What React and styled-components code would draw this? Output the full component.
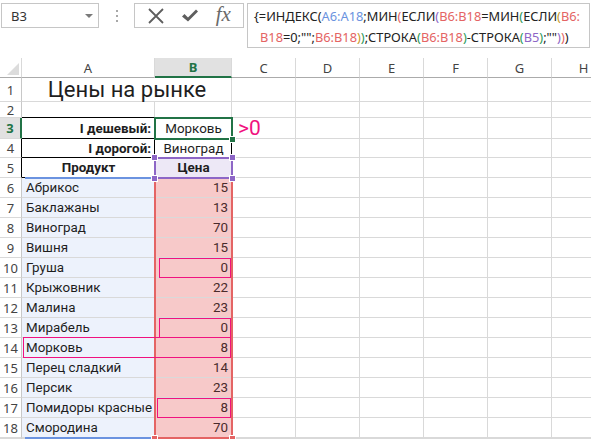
import React from "react";
import styled, { createGlobalStyle } from "styled-components";

const GlobalStyle = createGlobalStyle`
  html, body {
    margin: 0;
    padding: 0;
    background: #fff;
  }
  body {
    width: 591px;
    height: 441px;
    overflow: hidden;
    font-family: "Noto Sans", "Open Sans", sans-serif;
    color: #222;
  }
`;

const UI_FONT = `"Noto Sans", "Open Sans", sans-serif`;
const CELL_FONT = `Roboto, "Liberation Sans", sans-serif`;

const GRID = "#d9d9d9";
const GREEN = "#217346";
const BLUE = "#6b93e0";
const RED = "#e46464";
const PURPLE = "#8d66c6";
const MAGENTA = "#f0127f";

const Page = styled.div`
  width: 591px;
  height: 441px;
  overflow: hidden;
  display: flex;
  flex-direction: column;
`;

const Toolbar = styled.div`
  height: 58px;
  box-sizing: border-box;
  padding: 3px 1px 0 1px;
  display: flex;
  align-items: flex-start;
`;

const NameBox = styled.div`
  width: 98px;
  height: 25px;
  box-sizing: border-box;
  border: 1px solid #c6c6c6;
  display: flex;
  align-items: center;
  justify-content: space-between;
  padding: 0 5px 0 9px;
  font-family: ${UI_FONT};
  font-size: 13px;
  color: #333;
`;

const Caret = styled.span`
  width: 0;
  height: 0;
  border-left: 4px solid transparent;
  border-right: 4px solid transparent;
  border-top: 4px solid #7a7a7a;
`;

const Grip = styled.div`
  width: 35px;
  height: 25px;
  display: flex;
  flex-direction: column;
  align-items: center;
  justify-content: center;
  gap: 3px;

  span {
    width: 2px;
    height: 2px;
    background: #a8a8a8;
  }
`;

const ButtonBox = styled.div`
  width: 110px;
  height: 25px;
  box-sizing: border-box;
  border: 1px solid #c6c6c6;
  display: flex;
  align-items: center;
  justify-content: space-around;
  padding: 0 4px;
`;

const FxLabel = styled.span`
  font-family: "Liberation Serif", serif;
  font-style: italic;
  font-size: 21px;
  color: #6a6a6a;
  line-height: 1;
  margin-top: -2px;
`;

const FormulaBox = styled.div`
  margin-left: 3px;
  flex: 1;
  height: 45px;
  box-sizing: border-box;
  border: 1px solid #c6c6c6;
  padding: 2px 0 0 6px;
  font-family: ${UI_FONT};
  font-size: 12.8px;
  line-height: 21px;
  color: #222;
  white-space: nowrap;
  overflow: hidden;
`;

const FormulaLine = styled.div`
  padding-left: ${p => p.$indent || 0}px;
`;

const Tok = styled.span`
  color: ${p => p.$c || "#222"};
`;

const Sheet = styled.div`
  display: grid;
  grid-template-columns: 22px 133px 77px 64px 64px 64px 64px 64px 64px;
  grid-template-rows: 20px 24px 16px 21px 19px repeat(14, 20px);
  width: 591px;
  overflow: hidden;
`;

const ColHead = styled.div`
  grid-column: ${p => p.$col};
  grid-row: 1;
  box-sizing: border-box;
  border-right: 1px solid ${GRID};
  border-bottom: ${p => (p.$active ? `2px solid ${GREEN}` : "1px solid #ababab")};
  background: ${p => (p.$active ? "#e1e1e1" : "#fff")};
  color: ${p => (p.$active ? GREEN : "#444")};
  font-weight: ${p => (p.$active ? 700 : 400)};
  font-family: ${UI_FONT};
  font-size: 13px;
  display: flex;
  align-items: center;
  justify-content: center;
`;

const Corner = styled.div`
  grid-column: 1;
  grid-row: 1;
  box-sizing: border-box;
  border-right: 1px solid ${GRID};
  border-bottom: 1px solid #ababab;
  position: relative;

  &::after {
    content: "";
    position: absolute;
    right: 2px;
    bottom: 2px;
    width: 0;
    height: 0;
    border-left: 12px solid transparent;
    border-bottom: 12px solid #dcdcdc;
  }
`;

const RowHead = styled.div`
  grid-column: 1;
  grid-row: ${p => p.$row};
  box-sizing: border-box;
  border-bottom: 1px solid ${GRID};
  border-right: ${p => (p.$active ? `2px solid ${GREEN}` : `1px solid ${p.$edge || "#c8c8c8"}`)};
  background: ${p => (p.$active ? "#e1e1e1" : "#fff")};
  color: ${p => (p.$active ? GREEN : "#444")};
  font-weight: ${p => (p.$active ? 700 : 400)};
  font-family: ${UI_FONT};
  font-size: 13px;
  display: flex;
  align-items: center;
  justify-content: center;
`;

const Cell = styled.div`
  grid-column: ${p => p.$col};
  grid-row: ${p => p.$row};
  box-sizing: border-box;
  border-right: 1px solid ${p => p.$br || GRID};
  border-bottom: 1px solid ${p => p.$bb || GRID};
  background: ${p => p.$bg || "#fff"};
  display: flex;
  align-items: center;
  justify-content: ${p =>
    p.$align === "right" ? "flex-end" : p.$align === "center" ? "center" : "flex-start"};
  padding: 0 3px 0 ${p => p.$pl || 4}px;
  font-family: ${CELL_FONT};
  font-size: ${p => p.$size || 13.4}px;
  font-weight: ${p => (p.$bold ? 700 : 400)};
  color: ${p => p.$color || "#1e1e1e"};
  white-space: nowrap;
  overflow: visible;
`;

const Frame = styled.div`
  grid-column: ${p => p.$col};
  grid-row: ${p => p.$row};
  margin: ${p => p.$m || "0"};
  box-sizing: border-box;
  position: relative;
  pointer-events: none;
  border-style: solid;
  border-color: ${p => p.$color};
  border-width: ${p => p.$w || "2px"};
`;

const Handle = styled.span`
  position: absolute;
  width: 5px;
  height: 5px;
  background: ${p => p.$color};
  border: 1px solid #fff;
  ${p => (p.$top ? "top: -5px;" : "bottom: -5px;")}
  ${p => (p.$left ? "left: -5px;" : "right: -5px;")}
`;

const products = [
  ["Абрикос", 15],
  ["Баклажаны", 13],
  ["Виноград", 70],
  ["Вишня", 15],
  ["Груша", 0],
  ["Крыжовник", 22],
  ["Малина", 23],
  ["Мирабель", 0],
  ["Морковь", 8],
  ["Перец сладкий", 14],
  ["Персик", 23],
  ["Помидоры красные", 8],
  ["Смородина", 70],
];

const letters = ["A", "B", "C", "D", "E", "F", "G", "H"];

const XIcon = () => (
  <svg width="18" height="18" viewBox="0 0 18 18">
    <path d="M2 2 L16 16 M16 2 L2 16" stroke="#5e5e5e" strokeWidth="1.8" fill="none" />
  </svg>
);

const CheckIcon = () => (
  <svg width="18" height="16" viewBox="0 0 18 16">
    <path d="M1 8.5 L3.5 6 L7 9.5 L15 1.5 L17 3.5 L7 13.5 Z" fill="#5e5e5e" />
  </svg>
);

const FormulaBar = () => (
  <FormulaBox>
    <FormulaLine>
      <Tok>{"{=ИНДЕКС("}</Tok>
      <Tok $c={BLUE}>A6:A18</Tok>
      <Tok>;МИН</Tok>
      <Tok $c={RED}>(</Tok>
      <Tok>ЕСЛИ</Tok>
      <Tok $c={PURPLE}>(</Tok>
      <Tok $c={RED}>B6:B18</Tok>
      <Tok>=МИН</Tok>
      <Tok $c="#2d9a5a">(</Tok>
      <Tok>ЕСЛИ</Tok>
      <Tok $c="#c89a2a">(</Tok>
      <Tok $c={RED}>B6:</Tok>
    </FormulaLine>
    <FormulaLine $indent={6}>
      <Tok $c={RED}>B18</Tok>
      <Tok>=0;"";</Tok>
      <Tok $c={RED}>B6:B18</Tok>
      <Tok $c="#c89a2a">)</Tok>
      <Tok $c="#2d9a5a">)</Tok>
      <Tok>;СТРОКА</Tok>
      <Tok $c="#2d9a5a">(</Tok>
      <Tok $c={RED}>B6:B18</Tok>
      <Tok $c="#2d9a5a">)</Tok>
      <Tok>-СТРОКА</Tok>
      <Tok $c="#2d9a5a">(</Tok>
      <Tok $c={PURPLE}>B5</Tok>
      <Tok $c="#2d9a5a">)</Tok>
      <Tok>;""</Tok>
      <Tok $c={PURPLE}>)</Tok>
      <Tok $c={RED}>)</Tok>
      <Tok>)</Tok>
    </FormulaLine>
  </FormulaBox>
);

const App = () => {
  const cells = [];

  // empty background cells for columns C..H on every row
  for (let r = 1; r <= 19; r++) {
    for (let c = 4; c <= 9; c++) {
      if (r === 3 && c === 4) continue;
      cells.push(<Cell key={`e${r}-${c}`} $row={r + 1} $col={c} />);
    }
  }

  cells.push(
    <Cell key="a1" $row={2} $col="2 / 4" $align="center" $size={22}>
      Цены на рынке
    </Cell>,
    <Cell key="a2" $row={3} $col={2} $bb="#000" />,
    <Cell key="b2" $row={3} $col={3} $bb="#000" />,
    <Cell key="a3" $row={4} $col={2} $align="right" $bold $bb="#000" $br="#000">
      I дешевый:
    </Cell>,
    <Cell key="b3" $row={4} $col={3} $align="center" $bb="#000" $br="#000">
      Морковь
    </Cell>,
    <Cell key="c3" $row={4} $col={4} $size={21} $pl={6} $color={MAGENTA}>
      &gt;0
    </Cell>,
    <Cell key="a4" $row={5} $col={2} $align="right" $bold $bb="#000" $br="#000">
      I дорогой:
    </Cell>,
    <Cell key="b4" $row={5} $col={3} $align="center" $bb="#000" $br="#000">
      Виноград
    </Cell>,
    <Cell key="a5" $row={6} $col={2} $align="center" $bold $bb="#000" $br="#000">
      Продукт
    </Cell>,
    <Cell key="b5" $row={6} $col={3} $align="center" $bold $bg="#ede8f6" $br="#000">
      Цена
    </Cell>
  );

  products.forEach(([name, price], i) => {
    const r = i + 7;
    cells.push(
      <Cell key={`n${i}`} $row={r} $col={2} $bg="#edf2fc">
        {name}
      </Cell>,
      <Cell key={`p${i}`} $row={r} $col={3} $bg="#f7c9c9" $align="right" $color="#4a2b2b">
        {price}
      </Cell>
    );
  });

  cells.push(<Cell key="a19" $row={20} $col={2} />, <Cell key="b19" $row={20} $col={3} />);

  return (
    <Page>
      <GlobalStyle />
      <Toolbar>
        <NameBox>
          B3
          <Caret />
        </NameBox>
        <Grip>
          <span />
          <span />
          <span />
        </Grip>
        <ButtonBox>
          <XIcon />
          <CheckIcon />
          <FxLabel>fx</FxLabel>
        </ButtonBox>
        <FormulaBar />
      </Toolbar>

      <Sheet>
        <Corner />
        {letters.map((l, i) => (
          <ColHead key={l} $col={i + 2} $active={l === "B"}>
            {l}
          </ColHead>
        ))}
        {Array.from({ length: 19 }, (_, i) => (
          <RowHead
            key={i}
            $row={i + 2}
            $active={i + 1 === 3}
            $edge={i + 1 === 4 || i + 1 === 5 ? "#000" : undefined}
          >
            {i + 1 <= 18 ? i + 1 : ""}
          </RowHead>
        ))}

        {cells}

        {/* range highlights from the formula */}
        <Frame $col={2} $row="7 / 20" $color={BLUE} $w="2px 0 2px 0" $m="-1px 2px -1px 3px" />
        <Frame $col={3} $row="7 / 20" $color={RED} $w="0 2px 2px 2px" $m="0 -1px -1px -1px">
          <Handle $color={RED} $left />
          <Handle $color={RED} />
        </Frame>
        <Frame $col={3} $row={6} $color={PURPLE} $m="-1px -1px -1px -1px">
          <Handle $color={PURPLE} $top $left />
          <Handle $color={PURPLE} $top />
          <Handle $color={PURPLE} $left />
          <Handle $color={PURPLE} />
        </Frame>

        {/* conditional formatting boxes */}
        <Frame $col={3} $row={11} $color={MAGENTA} $w="1px" $m="0 1px 0 4px" />
        <Frame $col={3} $row={14} $color={MAGENTA} $w="1px" $m="0 1px 0 4px" />
        <Frame $col="2 / 4" $row={15} $color={MAGENTA} $w="1px" $m="-1px 1px 0 1px" />
        <Frame $col={3} $row={18} $color={MAGENTA} $w="1px" $m="0 1px 0 2px" />

        {/* active cell */}
        <Frame $col={3} $row={4} $color={GREEN} $m="-1px -1px -1px -1px">
          <Handle $color={GREEN} />
        </Frame>
      </Sheet>
    </Page>
  );
};

export default App;
